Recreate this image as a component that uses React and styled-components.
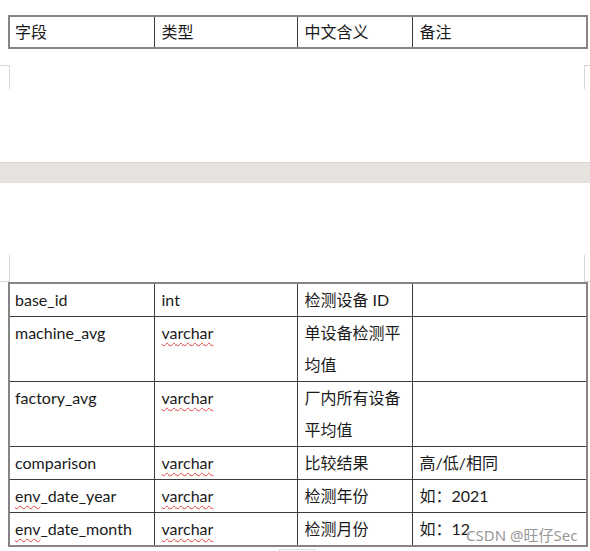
import styled, { createGlobalStyle } from "styled-components";

const GlobalStyle = createGlobalStyle`
  html, body {
    margin: 0;
    padding: 0;
    background: #ffffff;
  }
  body {
    font-family: Lato, "Noto Sans CJK SC", sans-serif;
    color: #1a1a1a;
  }
`;

const Viewport = styled.div`
  position: relative;
  width: 590px;
  height: 551px;
  overflow: hidden;
  background: #ffffff;
`;

const Page = styled.section`
  display: flex;
  flex-direction: column;
  height: ${(p) => p.$height || "auto"};
  background: #ffffff;
  padding-top: ${(p) => p.$top || 0}px;
  box-sizing: border-box;
`;

const PageGap = styled.div`
  height: 21px;
  background: #e6e2de;
  border-top: 1px solid #d8d4d0;
  border-bottom: 1px solid #dedbd8;
  box-sizing: border-box;
`;

const MarkRow = styled.div`
  display: flex;
  justify-content: space-between;
  height: ${(p) => p.$height}px;
  margin-top: ${(p) => p.$gap || 0}px;
`;

const Mark = styled.div`
  width: ${(p) => p.$width}px;
  box-sizing: border-box;
  border-color: #d6d6d6;
  border-style: solid;
  border-width: 0;
  ${(p) => (p.$side === "left" ? "border-right-width: 1px;" : "border-left-width: 1px;")}
  ${(p) => (p.$edge === "top" ? "border-top-width: 1px;" : "border-bottom-width: 1px;")}
`;

const Table = styled.table`
  margin-left: 8px;
  width: 578px;
  table-layout: fixed;
  border-collapse: collapse;
  border: 2px solid #858585;
  font-size: 16px;
`;

const Cell = styled.td`
  padding: 0 6px 0 7px;
  border: 1px solid #3c3c3c;
  line-height: ${(p) => p.$line || 32}px;
  height: ${(p) => p.$height || 32}px;
  vertical-align: top;
  text-align: left;
  color: #1a1a1a;
  word-break: break-all;

  &:first-child {
    padding-left: 5px;
  }
`;

const Misspelled = styled.span`
  text-decoration: underline wavy #e2403c;
  text-decoration-thickness: 1px;
  text-underline-offset: 3px;
`;

const Watermark = styled.div`
  position: absolute;
  left: 466px;
  top: 524px;
  font-family: "Noto Sans", "Noto Sans CJK SC", sans-serif;
  font-size: 15px;
  line-height: 22px;
  color: rgba(130, 130, 130, 0.85);
  text-shadow: 0 0 1px #ffffff;
  white-space: nowrap;
`;

const Footer = styled.div`
  display: flex;
  margin-top: 2px;
  padding-left: 279px;
`;

const Tab = styled.div`
  width: 34px;
  height: 6px;
  border: 1px solid #dcdcdc;
  border-bottom: none;
`;

const widths = ["145px", "143px", "115px", "175px"];

const header = ["字段", "类型", "中文含义", "备注"];

const rows = [
  { h: 32, cells: ["base_id", "int", "检测设备 ID", ""] },
  { h: 64, cells: ["machine_avg", "~varchar", "单设备检测平均值", ""] },
  { h: 63, cells: ["factory_avg", "~varchar", "厂内所有设备平均值", ""] },
  { h: 32, cells: ["comparison", "~varchar", "比较结果", "高/低/相同"] },
  { h: 32, cells: ["env*_date_year", "~varchar", "检测年份", "如：2021"] },
  { h: 32, cells: ["env*_date_month", "~varchar", "检测月份", "如：12"] },
];

function renderText(text) {
  if (text.startsWith("~")) return <Misspelled>{text.slice(1)}</Misspelled>;
  if (text.includes("*")) {
    const [head, tail] = text.split("*");
    return (
      <>
        <Misspelled>{head}</Misspelled>
        {tail}
      </>
    );
  }
  return text;
}

function Columns() {
  return (
    <colgroup>
      {widths.map((w, i) => (
        <col key={i} style={{ width: w }} />
      ))}
    </colgroup>
  );
}

export default function App() {
  return (
    <Viewport>
      <GlobalStyle />
      <Page $height="162px" $top={15}>
        <Table>
          <Columns />
          <tbody>
            <tr>
              {header.map((t) => (
                <Cell key={t} $height={30} $line={30}>
                  {t}
                </Cell>
              ))}
            </tr>
          </tbody>
        </Table>
        <MarkRow $height={24} $gap={16}>
          <Mark $width={10} $side="left" $edge="top" />
          <Mark $width={6} $side="right" $edge="top" />
        </MarkRow>
      </Page>
      <PageGap />
      <Page>
        <MarkRow $height={27} $gap={72}>
          <Mark $width={10} $side="left" $edge="bottom" />
          <Mark $width={6} $side="right" $edge="bottom" />
        </MarkRow>
        <Table>
          <Columns />
          <tbody>
            {rows.map((row) => (
              <tr key={row.cells[0]}>
                {row.cells.map((c, i) => (
                  <Cell key={i} $height={row.h}>
                    {renderText(c)}
                  </Cell>
                ))}
              </tr>
            ))}
          </tbody>
        </Table>
        <Footer>
          <Tab />
        </Footer>
      </Page>
      <Watermark>CSDN @旺仔Sec</Watermark>
    </Viewport>
  );
}
